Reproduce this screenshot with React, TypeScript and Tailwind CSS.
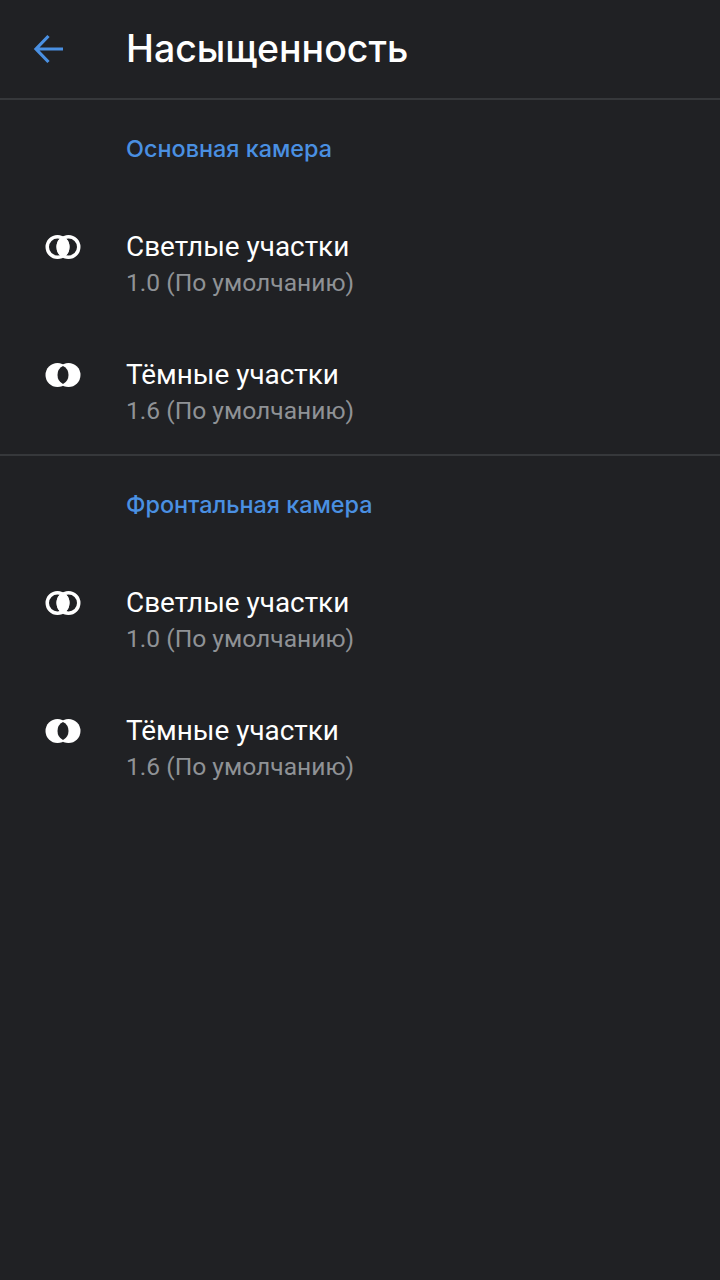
import React from 'react';

const LightIcon = () => (
  <svg width="36" height="26" viewBox="0 0 36 26" className="block">
    <circle cx="12.500" cy="13" r="10.250" fill="none" stroke="#fff" strokeWidth="3.500" />
    <circle cx="23.500" cy="13" r="10.250" fill="none" stroke="#fff" strokeWidth="3.500" />
    <path d="M18 2.340A12 12 0 0 1 18 23.660A12 12 0 0 1 18 2.340z" fill="#fff" />
  </svg>
);

const DarkIcon = () => (
  <svg width="36" height="26" viewBox="0 0 36 26" className="block">
    <circle cx="12.500" cy="13" r="12" fill="#fff" />
    <circle cx="23.500" cy="13" r="12" fill="#fff" />
    <path d="M18 4A10.100 10.100 0 0 1 18 22A10.100 10.100 0 0 1 18 4z" fill="#202124" />
  </svg>
);

const Row = ({ icon, title, value }: { icon: React.ReactNode; title: string; value: string }) => (
  <div className="flex h-[128px] items-start pt-[47px]">
    <div className="flex h-[36px] w-[126px] shrink-0 items-center pl-[45px]">{icon}</div>
    <div>
      <div className="text-[27.900px] leading-[36px] text-white">{title}</div>
      <div className="text-[24.600px] leading-[36px] text-[#8f9296]">{value}</div>
    </div>
  </div>
);

const Section = ({ title, border }: { title: string; border?: boolean }) => (
  <section className={border ? 'border-b-2 border-[#36383b] pb-[16px]' : 'pb-[16px]'}>
    <h2 className="pl-[126px] pt-[31px] pb-[15px] font-['Inter',sans-serif] text-[23.400px] leading-[36px] font-medium text-[#4a90e2]">
      {title}
    </h2>
    <Row icon={<LightIcon />} title="Светлые участки" value="1.0 (По умолчанию)" />
    <Row icon={<DarkIcon />} title="Тёмные участки" value="1.6 (По умолчанию)" />
  </section>
);

export default function App() {
  return (
    <div className="h-[1280px] w-[720px] overflow-hidden bg-[#202124] font-['Roboto',sans-serif]">
      <header className="flex h-[100px] items-center border-b-2 border-[#36383b]">
        <div className="flex w-[126px] shrink-0 pl-[32px]">
          <svg width="32" height="32" viewBox="0 0 32 32" fill="none" stroke="#4a90e2" strokeWidth="3.200">
            <path d="M31 16H4M16.500 3 4 16l12.500 13" />
          </svg>
        </div>
        <h1 className="font-['Inter',sans-serif] text-[37.500px] leading-[48px] font-medium text-white">Насыщенность</h1>
      </header>
      <Section title="Основная камера" border />
      <Section title="Фронтальная камера" />
    </div>
  );
}
